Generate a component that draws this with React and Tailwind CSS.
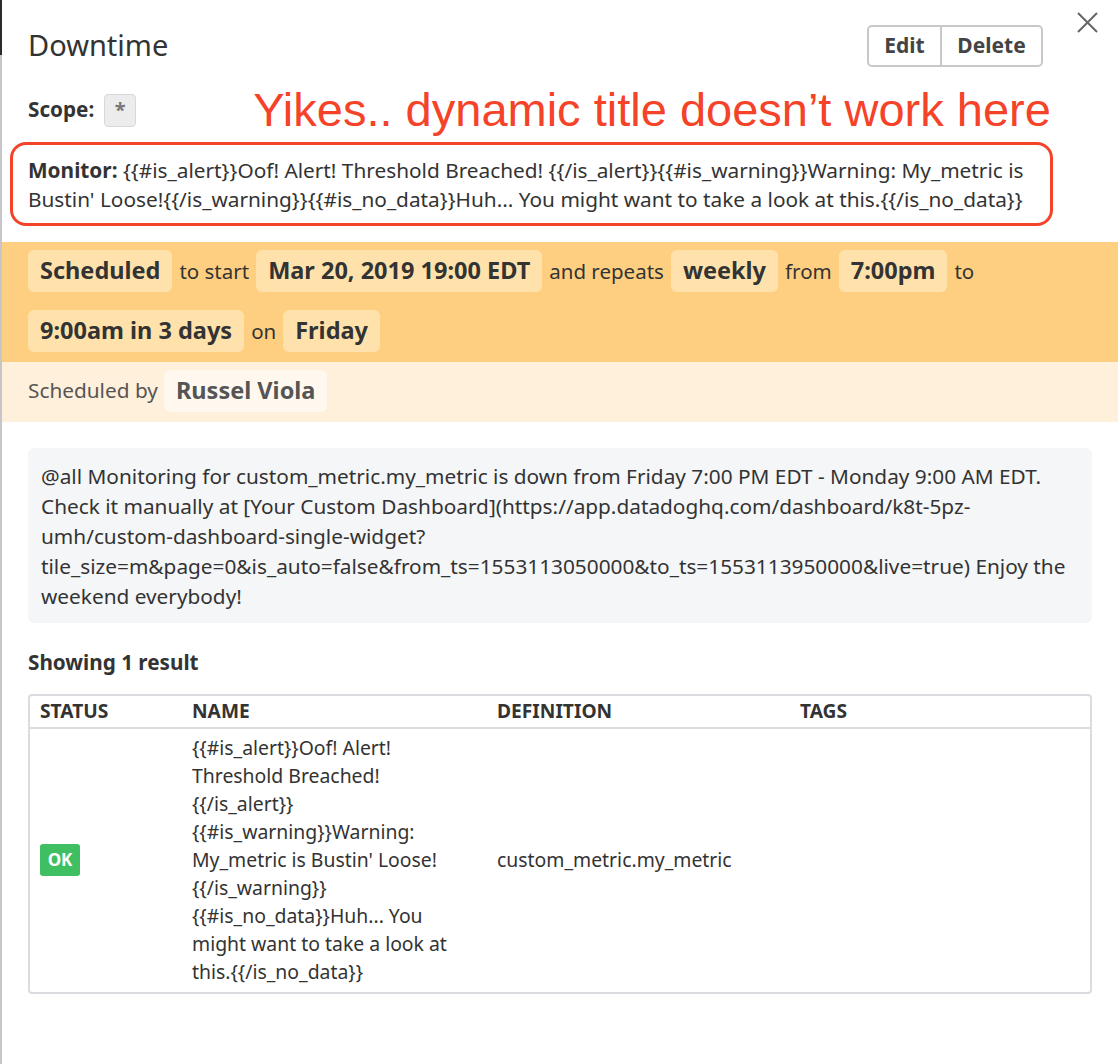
const font = { fontFamily: '"Noto Sans", "Open Sans", sans-serif' };

function Pill({ children, light }) {
  return (
    <span
      className={`inline-flex h-[42px] items-center rounded-[6px] px-[12px] text-[23.5px] font-bold ${
        light ? "bg-[#fff8ee] text-[#555]" : "bg-[#ffe2ab] text-[#333]"
      }`}
    >
      {children}
    </span>
  );
}

const nameText =
  "{{#is_alert}}Oof! Alert! Threshold Breached! {{/is_alert}}{{#is_warning}}Warning: My_metric is Bustin' Loose!{{/is_warning}}{{#is_no_data}}Huh... You might want to take a look at this.{{/is_no_data}}";

const monitorText =
  "{{#is_alert}}Oof! Alert! Threshold Breached! {{/is_alert}}{{#is_warning}}Warning: My_metric is Bustin' Loose!{{/is_warning}}{{#is_no_data}}Huh... You might want to take a look at this.{{/is_no_data}}";

export default function App() {
  return (
    <div className="flex h-[1064px] w-[1118px] overflow-hidden bg-white text-[#333]" style={font}>
      {/* left edge of the page behind the modal */}
      <div className="flex w-[2px] flex-col bg-[#c6c6c8]">
        <div className="h-[55px] bg-[#2b2b2b]" />
      </div>

      <div className="flex-1">
        {/* header */}
        <div className="flex items-start pl-[26px] pr-[20px] pt-[12px]">
          <h1 className="mt-[13px] text-[29px] leading-[40px] text-[#333]">Downtime</h1>
          <div className="ml-auto mt-[13px] flex h-[42px] overflow-hidden rounded-[5px] border-2 border-[#c8c8c8] text-[21px] font-bold text-[#444]">
            <button className="w-[73px] border-r-2 border-[#c8c8c8]">Edit</button>
            <button className="w-[99px]">Delete</button>
          </div>
          <button className="ml-[34px] h-[21px] w-[21px] text-[#666]">
            <svg viewBox="0 0 21 21" className="h-[21px] w-[21px]">
              <path d="M1 1 L20 20 M20 1 L1 20" stroke="currentColor" strokeWidth="2" fill="none" />
            </svg>
          </button>
        </div>

        {/* scope */}
        <div className="mt-[19px] flex h-[48px] items-center pl-[26px]">
          <span className="text-[20.7px] font-bold">Scope:</span>
          <span className="ml-[10px] flex h-[33px] w-[32px] items-center justify-center rounded-[4px] border border-[#d8d8d8] bg-[#ececec] text-[20px] font-bold text-[#777]">
            *
          </span>
          <span
            className="ml-[117px] text-[47px] leading-[48px] text-[#f5432a]"
            style={{ fontFamily: '"Liberation Sans", Arial, sans-serif' }}
          >
            Yikes.. dynamic title doesn’t work here
          </span>
        </div>

        {/* monitor, boxed in red */}
        <p className="ml-[8px] mt-[8px] w-[1043px] rounded-[16px] border-[3px] border-[#f5432a] pb-[9px] pl-[15px] pr-[8px] pt-[11px] text-[20.8px] leading-[29px]">
          <b>Monitor:</b> {monitorText}
        </p>

        {/* schedule */}
        <div className="mt-[16px] flex flex-wrap items-center gap-x-[7px] gap-y-[18px] bg-[#fecf80] pb-[10px] pl-[26px] pr-[26px] pt-[8px] text-[20.5px]">
          <Pill>Scheduled</Pill>
          <span>to start</span>
          <Pill>Mar 20, 2019 19:00 EDT</Pill>
          <span>and repeats</span>
          <Pill>weekly</Pill>
          <span>from</span>
          <Pill>7:00pm</Pill>
          <span>to</span>
          <Pill>9:00am in 3 days</Pill>
          <span>on</span>
          <Pill>Friday</Pill>
        </div>
        <div className="flex items-center gap-x-[6px] bg-[#fff0dc] pb-[10px] pl-[26px] pt-[8px] text-[20.8px] text-[#555]">
          <span>Scheduled by</span>
          <Pill light>Russel Viola</Pill>
        </div>

        {/* message */}
        <div className="ml-[26px] mt-[26px] w-[1064px] rounded-[6px] bg-[#f5f6f8] px-[13px] pb-[12px] pt-[13px] text-[20.8px] leading-[30px]">
          @all Monitoring for custom_metric.my_metric is down from Friday 7:00 PM EDT - Monday 9:00 AM EDT. Check it
          manually at [Your Custom Dashboard](https://app.datadoghq.com/dashboard/k8t-5pz-umh/custom-dashboard-single-widget?tile_size=m&page=0&is_auto=false&from_ts=1553113050000&to_ts=1553113950000&live=true)
          Enjoy the weekend everybody!
        </div>

        {/* results */}
        <div className="ml-[26px] mt-[26px] text-[20.7px] font-bold leading-[26px]">Showing 1 result</div>
        <div className="ml-[26px] mt-[19px] w-[1064px] rounded-[4px] border-2 border-[#dcdce0]">
          <div className="grid h-[33px] grid-cols-[150px_305px_303px_1fr] items-center border-b-2 border-[#dcdce0] text-[19.2px] font-bold uppercase">
            <span className="pl-[10px]">Status</span>
            <span className="pl-[12px]">Name</span>
            <span className="pl-[12px]">Definition</span>
            <span className="pl-[12px]">Tags</span>
          </div>
          <div className="grid grid-cols-[150px_305px_303px_1fr] items-center pb-[6px] pt-[5px] text-[19.4px] leading-[28px]">
            <span className="pl-[10px]">
              <span className="inline-flex h-[32px] w-[40px] items-center justify-center rounded-[3px] bg-[#3fbf62] text-[17px] font-bold text-white">
                OK
              </span>
            </span>
            <span className="w-[277px] pl-[12px]">{nameText}</span>
            <span className="pl-[12px]">custom_metric.my_metric</span>
            <span />
          </div>
        </div>
      </div>
    </div>
  );
}
